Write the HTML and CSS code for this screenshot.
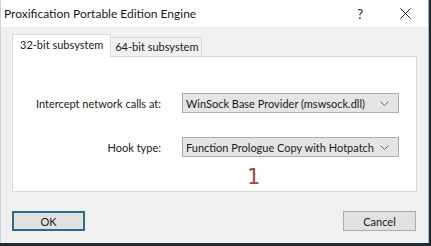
FILE: index.html
```html
<!DOCTYPE html>
<html lang="en">
<head>
    <meta charset="UTF-8">
    <title>Proxification Portable Edition Engine</title>
    <link rel="stylesheet" href="styles.css">
</head>
<body>
    <div class="window">
        <div class="titlebar">
            <span class="title">Proxification Portable Edition Engine</span>
            <span class="help">?</span>
            <svg class="close" width="11" height="11" viewBox="0 0 11 11">
                <path d="M0.5 0.5 L10.5 10.5 M10.5 0.5 L0.5 10.5" stroke="#222" stroke-width="1" fill="none"/>
            </svg>
        </div>

        <div class="content">
            <div class="tabs">
                <div class="tab active">32-bit subsystem</div>
                <div class="tab">64-bit subsystem</div>
            </div>

            <div class="panel">
                <div class="form">
                    <label>Intercept network calls at:</label>
                    <div class="combo">
                        <span>WinSock Base Provider (mswsock.dll)</span>
                        <svg width="9" height="5" viewBox="0 0 9 5"><path d="M0.5 0.5 L4.5 4.5 L8.5 0.5" stroke="#666" fill="none"/></svg>
                    </div>
                    <label>Hook type:</label>
                    <div class="combo">
                        <span>Function Prologue Copy with Hotpatch</span>
                        <svg width="9" height="5" viewBox="0 0 9 5"><path d="M0.5 0.5 L4.5 4.5 L8.5 0.5" stroke="#666" fill="none"/></svg>
                    </div>
                </div>
                <div class="mark">1</div>
            </div>

            <div class="buttons">
                <button class="default">OK</button>
                <button>Cancel</button>
            </div>
        </div>
    </div>
</body>
</html>
```

FILE: styles.css
```css
* {
    margin: 0;
    padding: 0;
    box-sizing: border-box;
}

body {
    background: #1f2a33;
    font-family: Lato, sans-serif;
    font-size: 11px;
    color: #1a1a1a;
}

.window {
    width: 429px;
    height: 243px;
    background: #f0f0f0;
    border-right: 1px solid #9fb3c4;
    border-left: 1px solid #c9d6e0;
    display: flex;
    flex-direction: column;
}

.titlebar {
    height: 27px;
    background: #fff;
    display: flex;
    align-items: center;
    padding-left: 3px;
}

.title {
    font-size: 12px;
    flex: 1;
}

.help {
    font-size: 13px;
    margin-right: 37px;
}

.close {
    margin-right: 17px;
}

.content {
    flex: 1;
    padding: 7px 12px 0 11px;
    display: flex;
    flex-direction: column;
}

.tabs {
    display: flex;
    align-items: flex-end;
    height: 22px;
    position: relative;
    z-index: 1;
}

.tab {
    height: 19px;
    padding: 0 3px 0 4px;
    border: 1px solid #d9d9d9;
    border-bottom: none;
    background: #f0f0f0;
    line-height: 18px;
    margin-left: -1px;
    white-space: nowrap;
}

.tab.active {
    height: 23px;
    margin-left: 0;
    margin-bottom: -1px;
    background: #fff;
    padding: 0 7px;
    line-height: 20px;
}

.panel {
    width: 405px;
    height: 136px;
    background: #fff;
    border: 1px solid #d9d9d9;
    padding-top: 36px;
}

.form {
    display: grid;
    grid-template-columns: 148px 217px;
    column-gap: 21px;
    row-gap: 24px;
    align-items: center;
}

.form label {
    text-align: right;
    white-space: nowrap;
}

.combo {
    height: 20px;
    background: #e5e5e5;
    border: 1px solid #adadad;
    display: flex;
    align-items: center;
    justify-content: space-between;
    padding: 0 9px 0 3px;
    white-space: nowrap;
}

.mark {
    margin-top: 9px;
    margin-left: 234px;
    font-family: "DejaVu Sans", sans-serif;
    font-size: 21px;
    line-height: 22px;
    color: #a5463a;
}

.buttons {
    display: flex;
    justify-content: space-between;
    margin-top: 19px;
}

button {
    font-family: Lato, sans-serif;
    font-size: 11px;
    width: 73px;
    height: 20px;
    background: #e1e1e1;
    border: 1px solid #adadad;
    color: #1a1a1a;
}

button.default {
    border: 2px solid #2c6d84;
    box-shadow: inset 0 0 0 1px #cfe6f3;
}
```
